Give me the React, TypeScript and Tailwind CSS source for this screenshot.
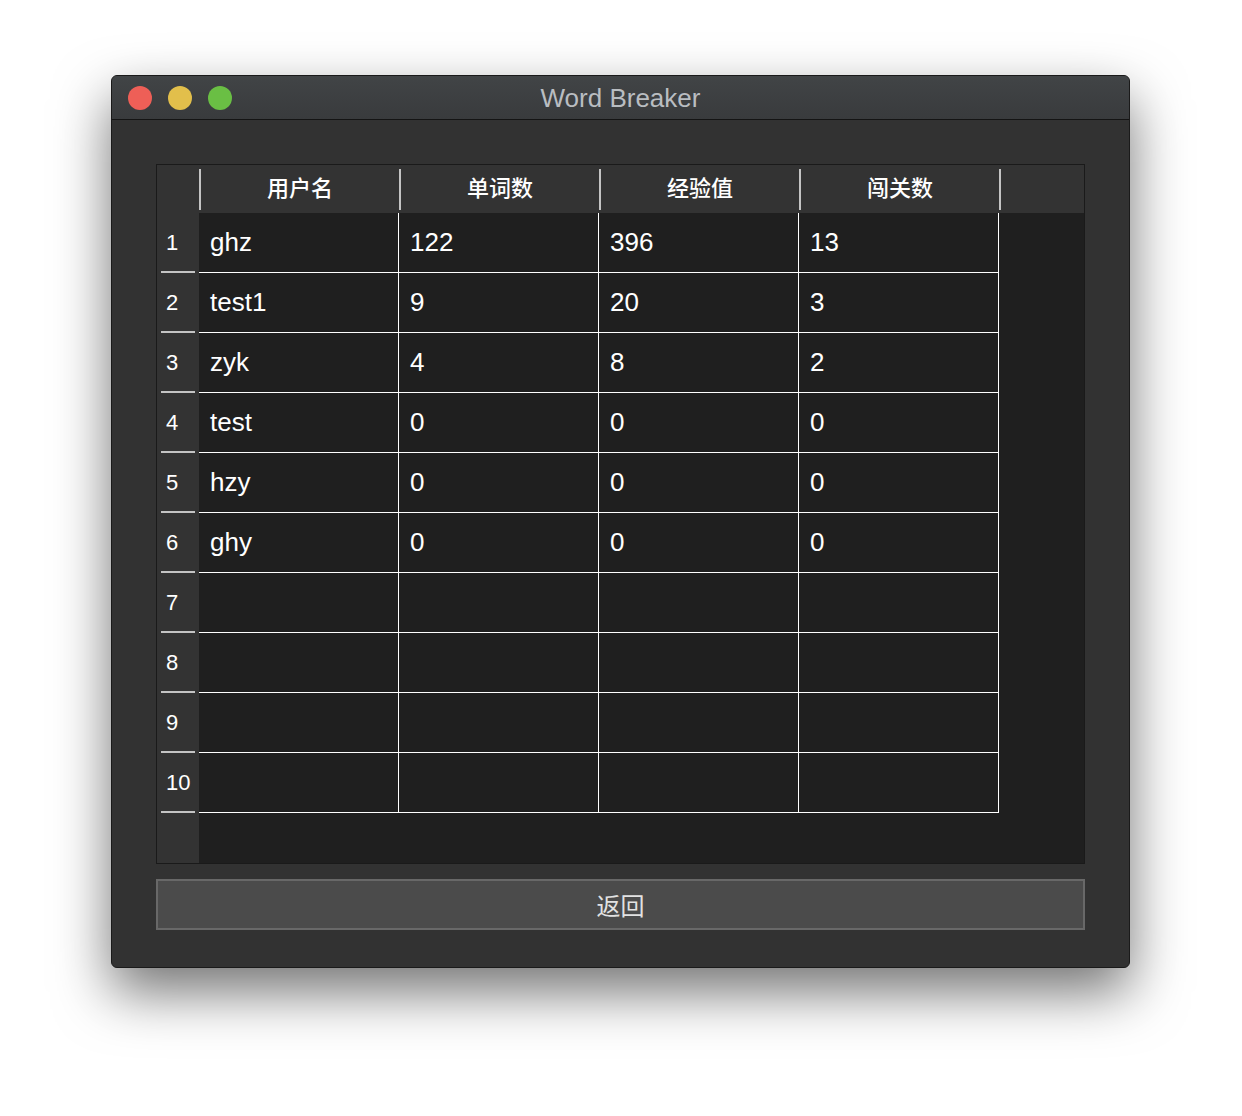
import React from "react";

const headers = ["用户名", "单词数", "经验值", "闯关数"];

const rows: string[][] = [
  ["ghz", "122", "396", "13"],
  ["test1", "9", "20", "3"],
  ["zyk", "4", "8", "2"],
  ["test", "0", "0", "0"],
  ["hzy", "0", "0", "0"],
  ["ghy", "0", "0", "0"],
  ["", "", "", ""],
  ["", "", "", ""],
  ["", "", "", ""],
  ["", "", "", ""],
];

const latin = { fontFamily: '"Liberation Sans", "Noto Sans CJK SC", sans-serif' };
const cjk = { fontFamily: '"Noto Sans CJK SC", "Liberation Sans", sans-serif' };

export default function App() {
  return (
    <div className="min-h-[1116px] w-[1242px] bg-white pt-[75px] pl-[111px]">
      <div className="flex h-[893px] w-[1019px] flex-col overflow-hidden rounded-[6px] border border-[#1a1a1a] bg-[#323232] shadow-[0_24px_55px_rgba(0,0,0,0.55)]">
        {/* Title bar */}
        <div className="relative flex h-[44px] shrink-0 items-center border-b border-[#141414] bg-gradient-to-b from-[#414446] to-[#393b3d]">
          <div className="flex items-center gap-[16px] pl-[16px]">
            <span className="h-[24px] w-[24px] rounded-full bg-[#ee5f57]" />
            <span className="h-[24px] w-[24px] rounded-full bg-[#e2bf4b]" />
            <span className="h-[24px] w-[24px] rounded-full bg-[#6abf44]" />
          </div>
          <div
            className="absolute inset-0 flex items-center justify-center pt-[2px] text-[26px] text-[#b9bdc1]"
            style={latin}
          >
            Word Breaker
          </div>
        </div>

        {/* Body */}
        <div className="flex flex-col px-[44px] pt-[44px]">
          <div className="flex h-[700px] w-[929px] flex-col border border-[#1a1a1a] bg-[#1f1f1f]">
            {/* Header */}
            <div className="flex h-[48px] shrink-0 bg-[#333333]">
              <div className="w-[42px] shrink-0" />
              {headers.map((h) => (
                <div key={h} className="flex w-[200px] shrink-0 items-center">
                  <div className="h-[41px] w-[2px] bg-[#c4c4c4]" />
                  <div
                    className="flex flex-1 items-center justify-center pb-[5px] text-[22px] font-medium text-white"
                    style={cjk}
                  >
                    {h}
                  </div>
                </div>
              ))}
              <div className="flex items-center">
                <div className="h-[41px] w-[2px] bg-[#c4c4c4]" />
              </div>
              <div className="flex-1" />
            </div>

            {/* Rows */}
            <div className="flex flex-1">
              <div className="flex w-[42px] shrink-0 flex-col bg-[#333333]">
                {rows.map((_, i) => (
                  <div key={i} className="flex h-[60px] flex-col">
                    <div
                      className="flex flex-1 items-center pl-[9px] text-[22px] text-white"
                      style={latin}
                    >
                      {i + 1}
                    </div>
                    <div className="ml-[4px] h-[2px] w-[34px] bg-[#c4c4c4]" />
                  </div>
                ))}
              </div>
              <div className="flex flex-1 flex-col">
                {rows.map((r, i) => (
                  <div key={i} className="flex h-[60px]">
                    {r.map((c, j) => (
                      <div
                        key={j}
                        className="flex w-[200px] shrink-0 items-center border-b border-r border-white pl-[11px] text-[26px] text-white"
                        style={latin}
                      >
                        {c}
                      </div>
                    ))}
                  </div>
                ))}
              </div>
            </div>
          </div>

          <button
            className="mt-[15px] flex h-[51px] w-[929px] items-center justify-center border-2 border-[#686868] bg-[#4b4b4b] text-[24px] text-[#e2e2e2]"
            style={cjk}
          >
            返回
          </button>
        </div>
      </div>
    </div>
  );
}
